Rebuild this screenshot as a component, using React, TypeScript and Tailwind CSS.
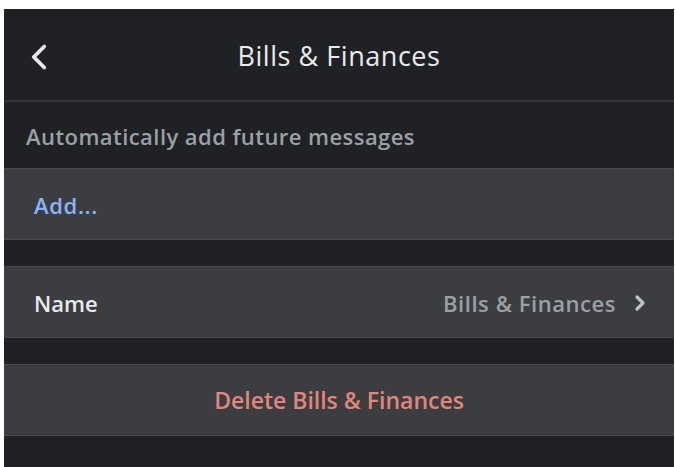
import React from 'react';
import { ChevronLeft, ChevronRight } from 'lucide-react';

const App: React.FC = () => {
  return (
    <div className="w-[675px] h-[467px] bg-white pt-[9px] pl-[4px] pr-[1px] overflow-hidden" style={{ fontFamily: '"Open Sans", Roboto, sans-serif' }}>
      <div className="h-full bg-[#202124] flex flex-col">
        {/* Header */}
        <div className="relative h-[93px] flex items-center justify-center pt-[4px] border-b-2 border-[#36373a]">
          <button className="absolute left-[14px] top-[27px] text-[#e8eaed]">
            <ChevronLeft size={42} strokeWidth={2.2} />
          </button>
          <h1 className="text-[27px] tracking-[0.02em] text-[#e8eaed]">Bills &amp; Finances</h1>
        </div>

        {/* Section label */}
        <div className="h-[66px] flex items-center pt-[3px] px-[22px]">
          <span className="text-[22px] tracking-[0.02em] font-semibold text-[#9aa0a6]">Automatically add future messages</span>
        </div>

        {/* Add row */}
        <div className="h-[72px] flex items-center pt-[3px] px-[30px] bg-[#3c3d41] border-y border-[#4a4b4f]">
          <span className="text-[22px] tracking-[0.03em] font-semibold text-[#8ab4f8]">Add...</span>
        </div>

        <div className="h-[26px]" />

        {/* Name row */}
        <div className="h-[72px] flex items-center justify-between pt-[2px] pl-[30px] pr-[22px] bg-[#3c3d41] border-y border-[#4a4b4f]">
          <span className="text-[22px] font-semibold text-[#e8eaed]">Name</span>
          <div className="flex items-center gap-[12px]">
            <span className="text-[22px] tracking-[0.025em] font-semibold text-[#9aa0a6]">Bills &amp; Finances</span>
            <ChevronRight size={24} strokeWidth={3.2} className="text-[#bdc1c6]" />
          </div>
        </div>

        <div className="h-[26px]" />

        {/* Delete row */}
        <div className="h-[72px] flex items-center justify-center bg-[#3c3d41] border-y border-[#4a4b4f]">
          <span className="text-[23px] font-semibold text-[#e0867c]">Delete Bills &amp; Finances</span>
        </div>
      </div>
    </div>
  );
};

export default App;
